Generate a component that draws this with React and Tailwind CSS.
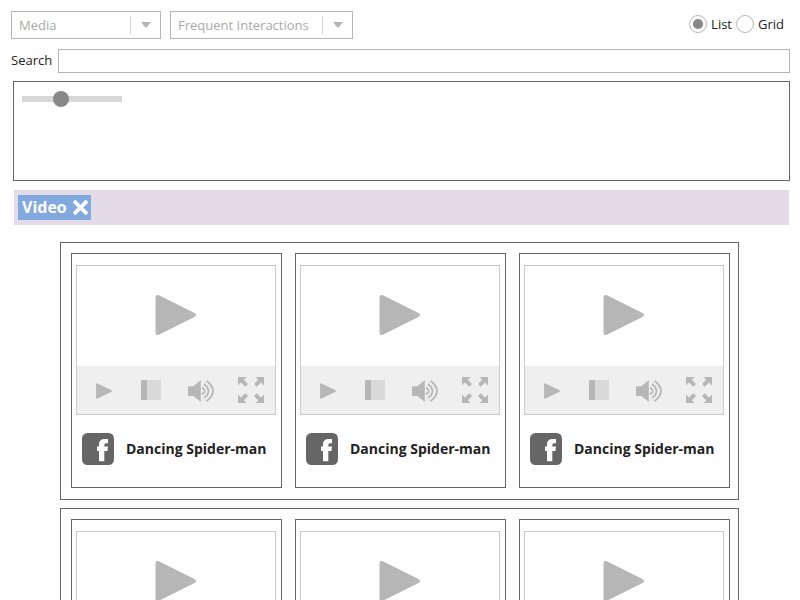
import React from "react";

function Select({ label, className }) {
  return (
    <div className={`flex h-7 items-center border border-[#b5b5b5] bg-white pl-[7px] text-[13px] leading-[18px] text-[#a9a9a9] ${className}`}>
      <span className="flex-1 pb-px whitespace-nowrap">{label}</span>
      <div className="flex h-[18px] w-[30px] items-center border-l border-[#cfcfcf] pl-[10px]">
        <svg width="11" height="6" viewBox="0 0 11 6" className="mb-px block">
          <path d="M0 0H10L5.700 5.200Q5 5.900 4.300 5.200Z" fill="#b5b5b5" />
        </svg>
      </div>
    </div>
  );
}

function Radio({ label, checked }) {
  return (
    <div className="flex items-center">
      <svg width="18" height="18" viewBox="0 0 18 18" className="mr-1 block">
        <circle cx="9" cy="9" r="8.5" fill="#fff" stroke="#b5b5b5" />
        {checked && <circle cx="9" cy="9" r="5.1" fill="#888" />}
      </svg>
      <span>{label}</span>
    </div>
  );
}

const expandArrow = "M238 377H246.500L243.800 379.700L248 384L245.300 386.700L241 382.400L238 385.500Z";

function Video() {
  return (
    <div className="flex h-[150px] w-[200px] flex-col border border-[#c8c8c8]">
      <div className="h-[100px]">
        <svg width="198" height="100" viewBox="0 0 198 100" className="block">
          <path d="M78.500 32Q78.500 28 82.500 29.500L117.500 47Q120.500 49 117.500 51L82.500 68.500Q78.500 70 78.500 66Z" fill="#b7b7b7" />
        </svg>
      </div>
      <div className="h-12 bg-[#efefef]">
        <svg width="198" height="48" viewBox="77 366 198 48" className="block">
          <path d="M96 384.500Q96 383 97.500 383.400L111.500 390.200Q112.500 391 111.500 391.700L97.500 398.600Q96 399 96 397.500Z" fill="#b7b7b7" />
          <rect x="141" y="380" width="20" height="20" fill="#d9d9d9" />
          <rect x="141" y="380" width="6" height="20" fill="#b7b7b7" />
          <path d="M188 386.300H193.500L200.800 380V402L193.500 396H188Z" fill="#b7b7b7" />
          <g fill="none" stroke="#b7b7b7" strokeWidth="1.800">
            <path d="M202 387.700Q207.500 391 202 394.500" />
            <path d="M204 384Q213 391 204 398" />
            <path d="M206.500 380.800Q219.500 391 206.500 401.200" />
          </g>
          <g fill="#b7b7b7">
            <path d={expandArrow} />
            <path transform="matrix(-1 0 0 1 502 0)" d={expandArrow} />
            <path transform="matrix(1 0 0 -1 0 780)" d={expandArrow} />
            <path transform="matrix(-1 0 0 -1 502 780)" d={expandArrow} />
          </g>
        </svg>
      </div>
    </div>
  );
}

function Card() {
  return (
    <div className="h-[235px] w-[211px] border border-[#666] pt-[11px] pl-1">
      <Video />
      <div className="mt-[18px] ml-[6px] flex items-center">
        <svg width="32" height="32" viewBox="0 0 32 32" className="mr-3 block">
          <rect width="32" height="32" rx="5.500" fill="#666" />
          <path d="M17 28.300V18H15V13.500H17V11.500Q17 6 22.500 6H26V10.300H24Q22.300 10.300 22.300 12V13.500H26L25.500 18H22.300V28.300Z" fill="#fff" />
        </svg>
        <span className="text-[14px] leading-5 font-bold whitespace-nowrap text-[#222]">Dancing Spider-man</span>
      </div>
    </div>
  );
}

function Row() {
  return (
    <div className="flex h-[258px] w-[679px] shrink-0 gap-[13px] border border-[#666] pt-[10px] pl-[10px]">
      <Card />
      <Card />
      <Card />
    </div>
  );
}

export default function App() {
  return (
    <div className="h-[600px] w-[800px] overflow-hidden bg-white pt-[11px] font-['Open_Sans',sans-serif] text-[13px] leading-[18px] text-[#222]">
      <header className="flex items-start pr-4 pl-[11px]">
        <Select label="Media" className="mr-[9px] w-[150px]" />
        <Select label="Frequent Interactions" className="w-[183px]" />
        <div className="mt-1 ml-auto flex gap-1">
          <Radio label="List" checked />
          <Radio label="Grid" />
        </div>
      </header>
      <div className="mt-[10px] flex h-6 items-center pl-[11px]">
        <label className="w-[47px] pb-[2px]">Search</label>
        <div className="h-6 w-[732px] border border-[#b5b5b5]" />
      </div>
      <section className="mt-2 ml-[13px] h-[100px] w-[777px] border border-[#666] pt-[9px] pl-2">
        <svg width="100" height="16" viewBox="0 0 100 16" className="block">
          <rect y="5" width="100" height="6" fill="#d7d7d7" />
          <circle cx="39" cy="8" r="8" fill="#888" />
        </svg>
      </section>
      <div className="mt-[9px] ml-[14px] flex h-[35px] w-[775px] items-center bg-[#e3dce8] pl-1">
        <div className="flex h-[25px] w-[73px] items-center bg-[#82a9df] pl-1 text-[16px] font-bold text-white">
          <span className="w-[51px] pb-[2px]">Video</span>
          <svg width="15" height="15" viewBox="0 0 15 15" className="block">
            <path d="M2.300 2.300L12.700 12.700M12.700 2.300L2.300 12.700" stroke="#fff" strokeWidth="3.800" strokeLinecap="square" />
          </svg>
        </div>
      </div>
      <main className="mt-[17px] ml-[60px] flex flex-col gap-2">
        <Row />
        <Row />
      </main>
    </div>
  );
}
